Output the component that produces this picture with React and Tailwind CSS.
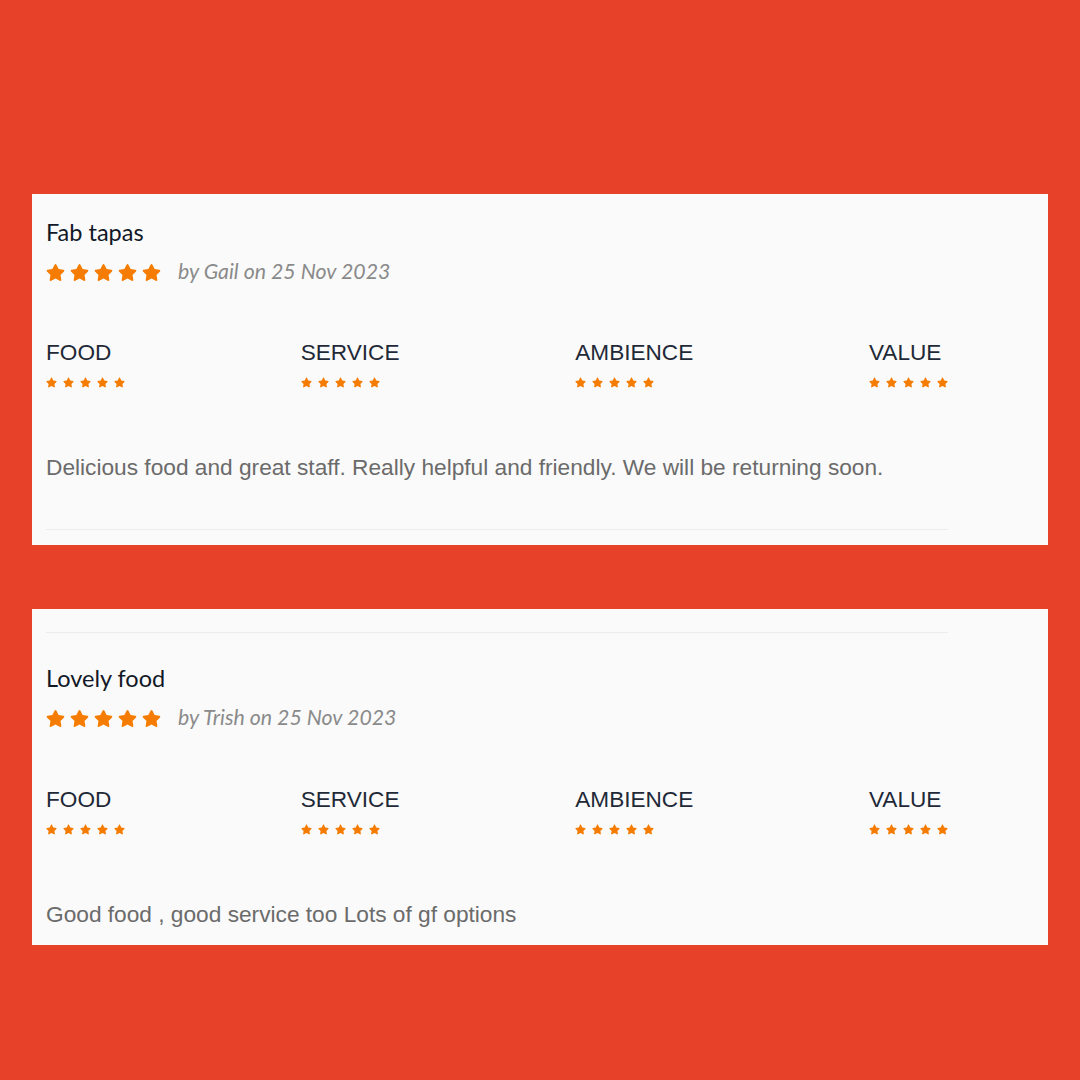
import { FaStar } from "react-icons/fa";

const reviews = [
  {
    title: "Fab tapas",
    author: "Gail",
    date: "25 Nov 2023",
    text: "Delicious food and great staff. Really helpful and friendly. We will be returning soon.",
  },
  {
    title: "Lovely food",
    author: "Trish",
    date: "25 Nov 2023",
    text: "Good food , good service too Lots of gf options",
  },
];

const categories = ["FOOD", "SERVICE", "AMBIENCE", "VALUE"];

function Stars({ size, gap }) {
  return (
    <div className={`flex items-center ${gap}`}>
      {[0, 1, 2, 3, 4].map((i) => (
        <FaStar key={i} className={`${size} text-[#f57c00]`} />
      ))}
    </div>
  );
}

function ReviewBody({ review, first }) {
  return (
    <div>
      <h2
        className={`${first ? "" : "mt-[33px]"} text-[23.5px] leading-[24px] text-[#111827]`}
        style={{ fontFamily: "Lato, 'Open Sans', sans-serif" }}
      >
        {review.title}
      </h2>

      <div className="mt-4 flex items-center h-6">
        <Stars size="w-[19px] h-[19px]" gap="gap-[5px]" />
        <span
          className="ml-[17px] italic text-[21.3px] text-[#8a8a8a]"
          style={{ fontFamily: "Lato, 'Open Sans', sans-serif" }}
        >
          by {review.author} on {review.date}
        </span>
      </div>

      <div
        className={`${first ? "mt-14" : "mt-[57px]"} flex justify-between w-[902px]`}
        style={{ fontFamily: "'Liberation Sans', Arial, sans-serif" }}
      >
        {categories.map((c) => (
          <div key={c}>
            <div className="text-[22.6px] leading-[26px] text-[#1f2937]">{c}</div>
            <div className="mt-[10px] h-3 flex items-center">
              <Stars size="w-[11px] h-[11px]" gap="gap-[6px]" />
            </div>
          </div>
        ))}
      </div>

      <p
        className="mt-[66px] text-[22.7px] leading-[26px] text-[#6b6b6b]"
        style={{ fontFamily: "'Liberation Sans', Arial, sans-serif" }}
      >
        {review.text}
      </p>
    </div>
  );
}

export default function App() {
  return (
    <div className="w-[1080px] h-[1080px] bg-[#e8412a] pt-[194px] px-8">
      {/* first review */}
      <div className="bg-[#fafafa] pl-[14px] pt-[26px] pb-[15px]">
        <ReviewBody review={reviews[0]} first />
        <div className="mt-[49px] w-[902px] h-px bg-[#ececec]" />
      </div>

      {/* second review */}
      <div className="mt-16 bg-[#fafafa] pl-[14px] pt-[23px] pb-[18px]">
        <div className="w-[902px] h-px bg-[#ececec]" />
        <ReviewBody review={reviews[1]} />
      </div>
    </div>
  );
}
